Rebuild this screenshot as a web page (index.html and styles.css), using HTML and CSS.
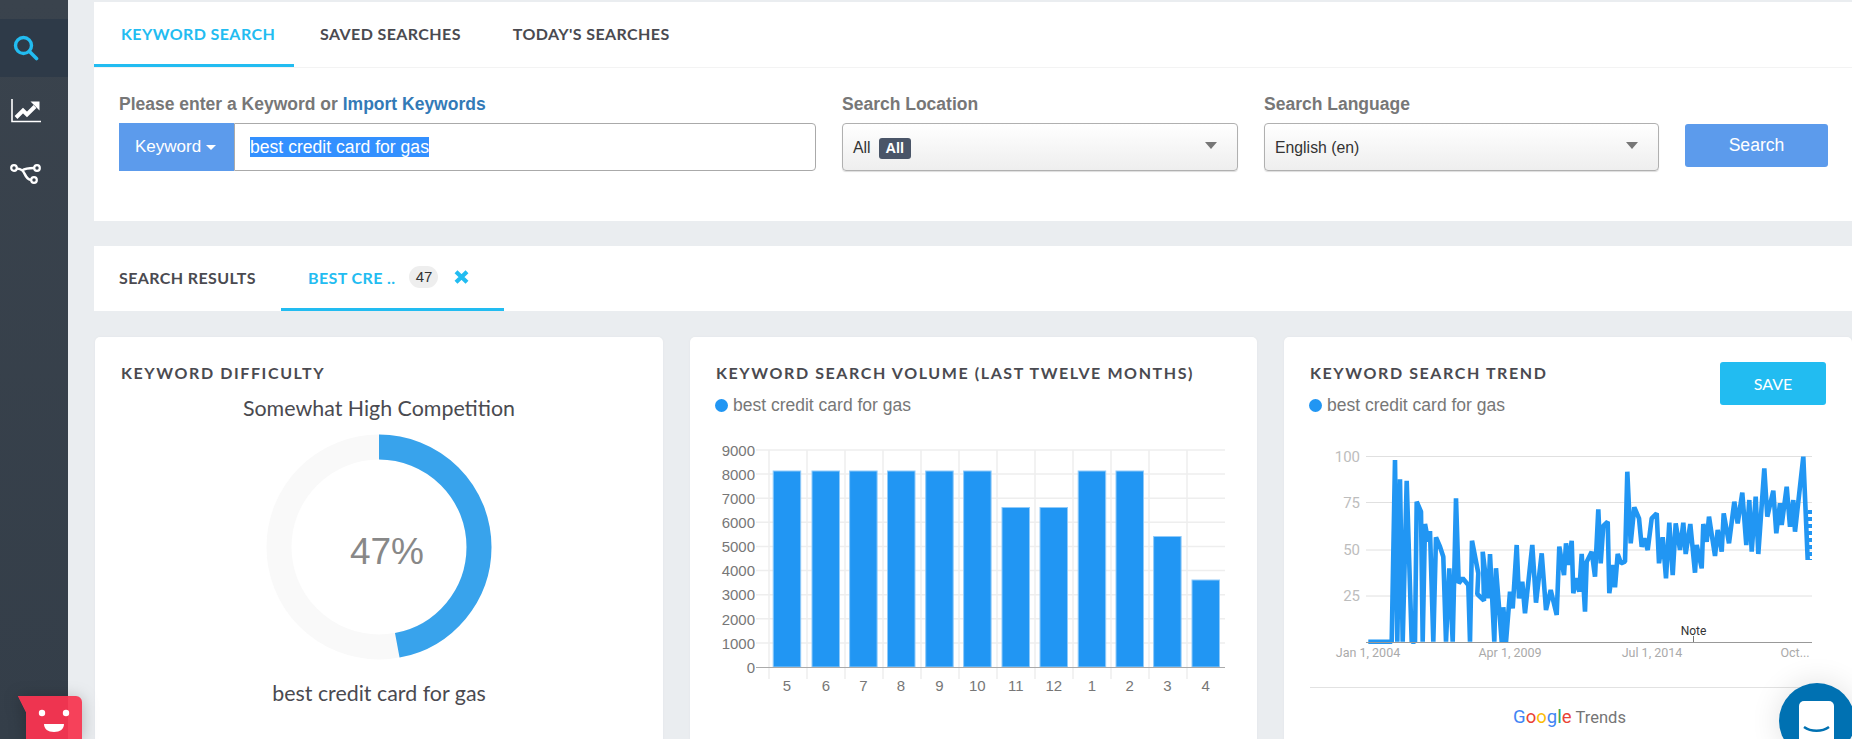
FILE: index.html
```html
<!DOCTYPE html>
<html lang="en">

<head>
    <meta charset="UTF-8">
    <title>Keyword Search</title>
    <link rel="stylesheet" href="styles.css">
</head>

<body>
    <div class="sidebar">
        <a class="nav-item active">
            <svg width="26" height="26" viewBox="0 0 26 26"><circle cx="10.500" cy="10.500" r="8" fill="none" stroke="#22bcf1" stroke-width="3.400"/><path d="M16.500 16.500l7 7" fill="none" stroke="#22bcf1" stroke-width="3.600" stroke-linecap="round"/></svg>
        </a>
        <a class="nav-item">
            <svg width="30" height="24" viewBox="0 0 30 24"><path d="M1 0v22.500h29" fill="none" stroke="#fff" stroke-width="1.600"/><path d="M5 18.500l7-7 4 4 8-8" fill="none" stroke="#fff" stroke-width="4"/><path d="M19.500 2.500h9v9z" fill="#fff"/></svg>
        </a>
        <a class="nav-item">
            <svg width="32" height="22" viewBox="0 0 32 22"><g fill="none" stroke="#fff" stroke-width="2.200"><circle cx="4" cy="5" r="2.800"/><circle cx="27" cy="5" r="2.800"/><circle cx="24" cy="17" r="2.800"/></g><path d="M7 5.500c5 .5 6.500 2.500 8 6 1.500 3.500 3 5 6 5.500M12 7.500c3-2 7-2.500 12-2.500" fill="none" stroke="#fff" stroke-width="2.600"/></svg>
        </a>
    </div>

    <div class="main">
        <div class="panel search-panel">
            <ul class="tabs">
                <li class="tab active">KEYWORD SEARCH</li>
                <li class="tab">SAVED SEARCHES</li>
                <li class="tab">TODAY'S SEARCHES</li>
            </ul>
            <div class="search-form">
                <div class="field">
                    <label>Please enter a Keyword or <a class="import-link">Import Keywords</a></label>
                    <div class="keyword-group">
                        <span class="keyword-btn">Keyword <i class="caret"></i></span>
                        <div class="keyword-input"><span class="selected">best credit card for gas</span></div>
                    </div>
                </div>
                <div class="field">
                    <label>Search Location</label>
                    <div class="select-box">All <span class="tag">All</span><i class="select-arrow"></i></div>
                </div>
                <div class="field">
                    <label>Search Language</label>
                    <div class="select-box">English (en)<i class="select-arrow"></i></div>
                </div>
                <button class="search-btn">Search</button>
            </div>
        </div>

        <div class="panel results-panel">
            <ul class="tabs">
                <li class="tab">SEARCH RESULTS</li>
                <li class="tab active result-tab">BEST CRE ..
                    <span class="count">47</span>
                    <svg class="close" width="15" height="14" viewBox="0 0 15 14"><path d="M2 1.800l11 10.400M13 1.800L2 12.200" stroke="#22bcf1" stroke-width="4.200"/></svg>
                </li>
            </ul>
        </div>

        <div class="cards">
            <div class="card">
                <h3>KEYWORD DIFFICULTY</h3>
                <p class="card-sub">Somewhat High Competition</p>
                <svg class="donut" width="226" height="226" viewBox="0 0 226 226">
                    <circle cx="113" cy="113" r="100" fill="none" stroke="#f9f9f9" stroke-width="25"/>
                    <circle cx="113" cy="113" r="100" fill="none" stroke="#38a3ec" stroke-width="25" stroke-dasharray="295.300 628.300" transform="rotate(-90 113 113)"/>
                    <text x="121" y="130" text-anchor="middle" class="donut-text">47%</text>
                </svg>
                <p class="card-caption">best credit card for gas</p>
            </div>

            <div class="card">
                <h3>KEYWORD SEARCH VOLUME (LAST TWELVE MONTHS)</h3>
                <p class="legend"><i class="dot"></i>best credit card for gas</p>
                <svg class="chart" width="516" height="280" viewBox="716 440 516 280">
                    <g class="grid">
                        <path d="M756 450h469M756 474.100h469M756 498.200h469M756 522.300h469M756 546.400h469M756 570.600h469M756 594.700h469M756 618.800h469M756 642.900h469"/>
                        <path d="M769 450v229M807 450v229M845 450v229M883 450v229M921 450v229M959 450v229M997 450v229M1035 450v229M1073 450v229M1111 450v229M1149 450v229M1187 450v229"/>
                    </g>
                    <g class="bars">
                        <rect x="773.200" y="471" width="27.500" height="196"/>
                        <rect x="812" y="471" width="27.500" height="196"/>
                        <rect x="849.600" y="471" width="27.500" height="196"/>
                        <rect x="887.500" y="471" width="27.500" height="196"/>
                        <rect x="925.700" y="471" width="27.500" height="196"/>
                        <rect x="963.600" y="471" width="27.500" height="196"/>
                        <rect x="1002" y="507.500" width="27.500" height="159.500"/>
                        <rect x="1040" y="507.500" width="27.500" height="159.500"/>
                        <rect x="1078.200" y="471" width="27.500" height="196"/>
                        <rect x="1116" y="471" width="27.500" height="196"/>
                        <rect x="1153.600" y="536.500" width="27.500" height="130.500"/>
                        <rect x="1192" y="580" width="27.500" height="87"/>
                    </g>
                    <path class="axis" d="M756 667.500h469"/>
                    <g class="y-labels">
                        <text x="755" y="455.500">9000</text>
                        <text x="755" y="479.500">8000</text>
                        <text x="755" y="503.500">7000</text>
                        <text x="755" y="528">6000</text>
                        <text x="755" y="552">5000</text>
                        <text x="755" y="576">4000</text>
                        <text x="755" y="600">3000</text>
                        <text x="755" y="624.500">2000</text>
                        <text x="755" y="648.500">1000</text>
                        <text x="755" y="672.500">0</text>
                    </g>
                    <g class="x-labels">
                        <text x="787" y="691">5</text>
                        <text x="825.800" y="691">6</text>
                        <text x="863.300" y="691">7</text>
                        <text x="901" y="691">8</text>
                        <text x="939.500" y="691">9</text>
                        <text x="977.300" y="691">10</text>
                        <text x="1015.800" y="691">11</text>
                        <text x="1053.800" y="691">12</text>
                        <text x="1092" y="691">1</text>
                        <text x="1129.700" y="691">2</text>
                        <text x="1167.300" y="691">3</text>
                        <text x="1205.700" y="691">4</text>
                    </g>
                </svg>
            </div>

            <div class="card">
                <div class="card-head">
                    <div>
                        <h3>KEYWORD SEARCH TREND</h3>
                        <p class="legend"><i class="dot"></i>best credit card for gas</p>
                    </div>
                    <button class="save-btn">SAVE</button>
                </div>
                <svg class="chart" width="516" height="225" viewBox="1310 440 516 225">
                    <path class="trend-grid" d="M1366 456.500h446M1366 502.500h446M1366 550h446M1366 596h446"/>
                    <g class="trend-y">
                        <text x="1360" y="462">100</text>
                        <text x="1360" y="508">75</text>
                        <text x="1360" y="555">50</text>
                        <text x="1360" y="601">25</text>
                    </g>
                    <polyline class="trend-line" points="1368.300,641.700 1391.700,641.700 1395,460 1397.300,641.700 1400,479.300 1402.700,641.700 1406.700,480.700 1411.700,641.700 1415,641.700 1416.700,501.700 1421,511.700 1422.700,641.700 1425,524 1428.300,541.700 1430,531 1433.300,641.700 1436,537.300 1440,546.700 1443.300,556.700 1446,641.700 1449.300,568.300 1452.700,641.700 1456,498.300 1458.700,583.300 1462.700,578.300 1468.300,585 1470,641.700 1472,540.700 1478.300,573.300 1477.300,594 1484,600.700 1482.700,551.700 1488.300,598.300 1490,554 1494.300,641.700 1496,568.300 1501.700,641.700 1503.300,607.300 1506,641.700 1510,591.700 1512.700,608.300 1516.700,545 1519,598.300 1522.300,581.700 1525,613.300 1532.300,545 1536,602.700 1541.700,553.300 1546,610 1550.700,590 1556.700,615 1559.300,546.700 1564,575 1566,543.300 1568.300,565 1571.700,540.700 1573.300,593.300 1576.700,578.300 1579.300,591.700 1581.700,554 1585,611.700 1586.700,561.700 1591.700,551.700 1595,576.700 1598.300,509.300 1600.700,563.300 1603.300,526 1607.700,521.700 1609.300,593.300 1613.300,565 1615,587.300 1617.700,554 1621,563.300 1625,561.700 1627.300,471.700 1630.700,543.300 1634.300,507.300 1639,518.300 1641.700,546.700 1644.300,538.300 1647.700,550 1651.700,518.300 1656.700,513.300 1659,563.300 1662.700,537.300 1666,578.300 1669.300,522.700 1672.700,575 1675.700,523.300 1680,550 1683.300,522.700 1685.700,554 1690.300,524 1695,572.700 1696.700,545 1701.700,568.300 1703.300,524 1706.700,541.700 1709,516.700 1715,556 1717.700,530 1721.700,551.700 1723.700,513.300 1729,543.300 1734.300,501.700 1737.700,523.300 1742.300,492.700 1746.300,545 1749.300,500 1751.700,551.700 1755.700,496.700 1758.300,554 1764.300,468.300 1767.300,516.700 1773.300,490.700 1776.300,533.300 1780,503.300 1781.700,525 1786.700,486.700 1790,526.700 1793.300,500 1795,531.700 1803.300,456.700 1807.700,560"/>
                    <path class="trend-dash" d="M1810 510v50"/>
                    <path class="trend-axis" d="M1366 642.500h446"/>
                    <path class="trend-note-tick" d="M1693.500 636v6"/>
                    <text class="trend-note" x="1693.500" y="635" text-anchor="middle">Note</text>
                    <g class="trend-x">
                        <text x="1368" y="657" text-anchor="middle">Jan 1, 2004</text>
                        <text x="1510" y="657" text-anchor="middle">Apr 1, 2009</text>
                        <text x="1652" y="657" text-anchor="middle">Jul 1, 2014</text>
                        <text x="1795" y="657" text-anchor="middle">Oct...</text>
                    </g>
                </svg>
                <div class="trends-logo">
                    <span class="g-blue">G</span><span class="g-red">o</span><span class="g-yellow">o</span><span class="g-blue">g</span><span class="g-green">l</span><span class="g-red">e</span><span class="trends-word">Trends</span>
                </div>
            </div>
        </div>
    </div>

    <!-- floating widgets -->
    <div class="mascot">
        <svg width="66" height="43" viewBox="0 0 66 43">
            <path d="M0 0h58a6 6 0 0 1 6 6v37H8V16z" fill="#f6415a"/>
            <path d="M0 0h50v43H8V16z" fill="#ee3450"/>
            <circle cx="24" cy="17" r="3.200" fill="#fff"/>
            <circle cx="48" cy="17" r="3.200" fill="#fff"/>
            <path d="M26 28h20c0 5-4 8-10 8s-10-3-10-8z" fill="#fff"/>
        </svg>
    </div>
    <div class="chat-bubble">
        <svg width="76" height="56" viewBox="0 0 76 56">
            <path d="M20 23a5 5 0 0 1 5-5h25a5 5 0 0 1 5 5v33H20z" fill="#fff"/>
            <path d="M25 44c7 5 18 5 25 0" fill="none" stroke="#0071b2" stroke-width="2.500"/>
        </svg>
    </div>
</body>

</html>
```
FILE: styles.css
```css
html,
body,
ul,
li,
h3,
p {
    padding: 0;
    margin: 0;
}

ul {
    list-style: none;
}

html,
body {
    height: 100%;
    overflow: hidden;
}

body {
    display: flex;
    background-color: #eaedf0;
    font-family: "Liberation Sans", Arial, sans-serif;
    color: #333;
}

.sidebar {
    flex: 0 0 68px;
    padding-top: 19px;
    background: linear-gradient(#3a434d, #343e49);
}

.nav-item {
    display: flex;
    align-items: center;
    justify-content: center;
    height: 58px;
    margin-bottom: 5px;
    padding-right: 16px;
}

.nav-item.active {
    background-color: #2e3a48;
}

.main {
    flex: 1;
    min-width: 0;
    margin-left: 26px;
    padding-top: 2px;
}

.panel {
    background-color: #fff;
}

.tabs {
    display: flex;
    font-family: Lato, "Noto Sans", sans-serif;
    font-size: 16px;
    font-weight: 700;
    color: #4a4a50;
}

.search-panel .tabs {
    border-bottom: 1px solid #f3f3f3;
}

.tab {
    display: flex;
    align-items: center;
    box-sizing: border-box;
    height: 65px;
    padding: 0 26px;
    border-bottom: 3px solid transparent;
    letter-spacing: 0.4px;
    white-space: nowrap;
}

.tab:first-child {
    padding-left: 27px;
}

.results-panel .tab:first-child {
    width: 187px;
    padding: 0 0 0 25px;
}

.tab.active {
    color: #22bcf1;
    border-bottom-color: #22bcf1;
}

.search-panel .tab.active {
    width: 200px;
}

.result-tab {
    width: 223px;
    padding: 0 0 0 27px;
}

.count {
    display: inline-block;
    flex: 0 0 29px;
    height: 22px;
    margin-left: 14px;
    border-radius: 11px;
    background-color: #eee;
    font-family: "Liberation Sans", sans-serif;
    font-size: 15px;
    font-weight: 400;
    letter-spacing: 0;
    line-height: 22px;
    text-align: center;
    color: #333;
}

.close {
    margin-left: 16px;
}

.search-panel {
    height: 219px;
    margin-bottom: 25px;
}

.search-form {
    display: grid;
    grid-template-columns: 697px 396px 395px 143px;
    column-gap: 26px;
    padding: 26px 0 0 25px;
}

.field label {
    display: block;
    height: 20px;
    margin-bottom: 9px;
    font-size: 17.500px;
    font-weight: 700;
    line-height: 20px;
    color: #777;
}

.import-link {
    color: #337ab7;
}

.keyword-group {
    display: flex;
    height: 48px;
}

.keyword-btn {
    display: flex;
    align-items: center;
    flex: 0 0 115px;
    padding-left: 16px;
    box-sizing: border-box;
    background-color: #5c9bec;
    color: #fff;
    font-size: 17px;
}

.caret {
    width: 0;
    height: 0;
    margin-left: 5px;
    border-top: 5px solid #fff;
    border-left: 5px solid transparent;
    border-right: 5px solid transparent;
}

.keyword-input {
    flex: 1;
    display: flex;
    align-items: center;
    padding-left: 15px;
    border: 1px solid #aaa;
    border-radius: 0 4px 4px 0;
    font-size: 17.600px;
}

.selected {
    background-color: #3390ff;
    color: #fff;
    line-height: 20px;
}

.select-box {
    position: relative;
    display: flex;
    align-items: center;
    height: 48px;
    padding: 2px 0 0 10px;
    box-sizing: border-box;
    border: 1px solid #b0b0b0;
    border-radius: 4px;
    background: linear-gradient(#fff, #eee);
    box-shadow: 0 1px 1px #ddd;
    font-size: 15.800px;
}

.tag {
    margin-left: 8px;
    padding: 0 7px;
    border-radius: 3px;
    background-color: #4a5568;
    color: #fff;
    font-size: 14.500px;
    font-weight: 700;
    line-height: 21px;
}

.select-arrow {
    position: absolute;
    right: 20px;
    top: 18px;
    width: 0;
    height: 0;
    border-top: 7px solid #777;
    border-left: 6px solid transparent;
    border-right: 6px solid transparent;
}

.search-btn {
    align-self: start;
    height: 43px;
    margin-top: 30px;
    border: none;
    border-radius: 3px;
    background-color: #5c9bec;
    color: #fff;
    font-family: "Liberation Sans", sans-serif;
    font-size: 17.600px;
}

.results-panel {
    height: 65px;
    margin-bottom: 26px;
}

.cards {
    display: grid;
    grid-template-columns: 568px 567px 568px;
    column-gap: 27px;
    margin-left: 1px;
}

.card {
    min-height: 430px;
    padding: 25px 26px 0;
    box-sizing: border-box;
    border-radius: 5px;
    background-color: #fff;
    box-shadow: 0 0 2px #dfe2e6;
}

.card h3 {
    font-family: Lato, "Noto Sans", sans-serif;
    font-size: 16px;
    font-weight: 700;
    line-height: 22px;
    letter-spacing: 1.600px;
    color: #4a4a50;
}

.card-sub,
.card-caption {
    font-family: Lato, "Noto Sans", sans-serif;
    font-size: 21.400px;
    line-height: 26px;
    text-align: center;
    color: #4a4a50;
}

.card-sub {
    margin-top: 11px;
}

.card-caption {
    margin-top: 20px;
}

.donut {
    display: block;
    margin: 13px auto 0;
}

.donut-text {
    font-size: 37px;
    fill: #888;
}

.card-head {
    display: flex;
    justify-content: space-between;
    align-items: flex-start;
}

.legend {
    display: flex;
    align-items: center;
    margin-top: 10px;
    font-size: 17.500px;
    line-height: 22px;
    color: #777;
}

.dot {
    width: 13px;
    height: 13px;
    margin: 0 5px 0 -1px;
    border-radius: 50%;
    background-color: #2196f3;
}

.save-btn {
    width: 106px;
    height: 43px;
    border: none;
    border-radius: 3px;
    background-color: #22bcf1;
    color: #fff;
    font-family: Lato, "Noto Sans", sans-serif;
    font-size: 16px;
}

.chart {
    display: block;
    margin-top: 24px;
}

.grid path {
    fill: none;
    stroke: #eeeeee;
    stroke-width: 1.500;
}

.bars rect {
    fill: #2196f3;
    stroke: #90caf9;
    stroke-width: 1;
}

.axis {
    stroke: #aaa;
    stroke-width: 1;
}

.y-labels text {
    font-size: 15px;
    fill: #777;
    text-anchor: end;
}

.x-labels text {
    font-size: 15px;
    fill: #777;
    text-anchor: middle;
}

.trend-grid {
    fill: none;
    stroke: #e0e0e0;
    stroke-width: 1;
}

.trend-y text {
    font-family: Roboto, sans-serif;
    font-size: 15px;
    fill: #bdbdbd;
    text-anchor: end;
}

.trend-x text {
    font-family: Roboto, sans-serif;
    font-size: 12.500px;
    fill: #aaa;
}

.trend-line {
    fill: none;
    stroke: #2196f3;
    stroke-width: 4.600;
    stroke-linejoin: bevel;
}

.trend-dash {
    fill: none;
    stroke: #2196f3;
    stroke-width: 4;
    stroke-dasharray: 4 3;
}

.trend-axis {
    stroke: #999;
    stroke-width: 1;
}

.trend-note-tick {
    stroke: #777;
    stroke-width: 1;
}

.trend-note {
    font-family: Roboto, sans-serif;
    font-size: 12px;
    fill: #333;
}

.trends-logo {
    margin-top: 22px;
    padding: 17px 0 0 3px;
    border-top: 1px solid #e2e2e2;
    font-family: Roboto, sans-serif;
    font-size: 18.500px;
    line-height: 24px;
    text-align: center;
}

.g-blue {
    color: #4285f4;
}

.g-red {
    color: #ea4335;
}

.g-yellow {
    color: #fbbc05;
}

.g-green {
    color: #34a853;
}

.trends-word {
    margin-left: 4px;
    font-size: 16.500px;
    color: #757575;
}

.mascot {
    position: absolute;
    left: 18px;
    top: 696px;
    filter: drop-shadow(0 2px 8px rgba(0, 0, 0, 0.25));
}

.chat-bubble {
    position: absolute;
    left: 1779px;
    top: 683px;
    width: 76px;
    height: 76px;
    border-radius: 50%;
    background-color: #0071b2;
    box-shadow: 0 0 30px rgba(0, 0, 0, 0.12);
}

.chat-bubble svg {
    display: block;
}
```
